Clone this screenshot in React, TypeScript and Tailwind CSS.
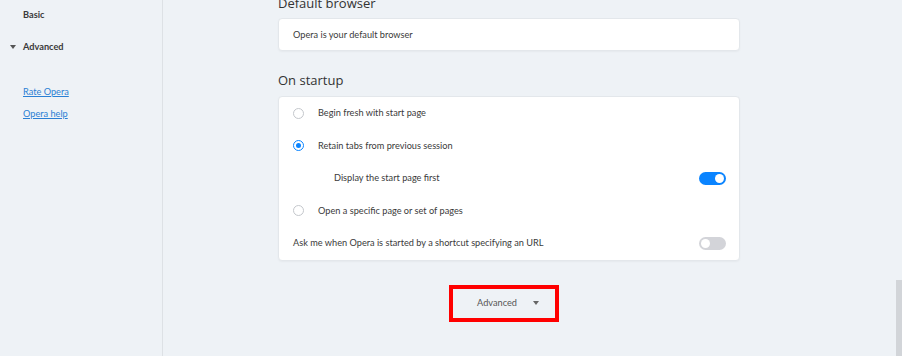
function Radio({ checked }: { checked?: boolean }) {
  return checked ? (
    <span className="flex h-[11px] w-[11px] items-center justify-center rounded-full border-[1.5px] border-[#0a84ff]">
      <span className="h-[5px] w-[5px] rounded-full bg-[#0a84ff]" />
    </span>
  ) : (
    <span className="h-[11px] w-[11px] rounded-full border border-[#c4c7cc]" />
  );
}

function Toggle({ on }: { on?: boolean }) {
  return (
    <span
      className={`flex h-[13px] w-[27px] items-center rounded-full px-[2px] ${
        on ? 'justify-end bg-[#0a84ff]' : 'justify-start bg-[#d3d4d9]'
      }`}
    >
      <span className="h-[9px] w-[9px] rounded-full bg-white" />
    </span>
  );
}

export default function App() {
  const rows = [
    { kind: 'radio', label: 'Begin fresh with start page' },
    { kind: 'radio', label: 'Retain tabs from previous session', checked: true },
    { kind: 'sub', label: 'Display the start page first', on: true },
    { kind: 'radio', label: 'Open a specific page or set of pages' },
    { kind: 'toggle', label: 'Ask me when Opera is started by a shortcut specifying an URL', on: false },
  ];

  return (
    <div className="flex h-[356px] w-[902px] overflow-hidden bg-[#eef2f6] font-['Lato',sans-serif] text-[#3a3a3a]">
      {/* sidebar */}
      <aside className="flex w-[163px] shrink-0 flex-col border-r border-[#dde1e5] pt-[7px] text-[9.2px]">
        <div className="pl-[23px] font-bold leading-[16px] text-[#3a3a3a]">Basic</div>
        <div className="mt-[16px] flex items-center leading-[16px] font-bold text-[#3a3a3a]">
          <span className="ml-[10px] mr-[7px] h-0 w-0 border-x-[3px] border-t-[4px] border-x-transparent border-t-[#555]" />
          Advanced
        </div>
        <a className="mt-[29px] pl-[23px] leading-[16px] text-[#2a7fd4] underline">Rate Opera</a>
        <a className="mt-[6px] pl-[23px] leading-[16px] text-[#2a7fd4] underline">Opera help</a>
      </aside>

      {/* main */}
      <main className="relative flex-1">
        <div className="-mt-[5px] ml-[115px] flex w-[462px] flex-col">
          <h2 className="font-['Open_Sans',sans-serif] text-[13px] leading-[16px] text-[#333]">Default browser</h2>
          <div className="mt-[7px] flex h-[33px] items-center rounded-[4px] border border-[#e3e7eb] bg-white px-[14px] text-[9.2px] shadow-[0_1px_2px_rgba(0,0,0,0.04)]">
            Opera is your default browser
          </div>

          <h2 className="mt-[21px] font-['Open_Sans',sans-serif] text-[13px] leading-[16px] text-[#333]">On startup</h2>
          <div className="mt-[8px] flex flex-col rounded-[4px] border border-[#e3e7eb] bg-white text-[9.2px] shadow-[0_1px_2px_rgba(0,0,0,0.04)]">
            {rows.map((r) => (
              <div key={r.label} className="flex h-[32.5px] items-center pl-[14px] pr-[13px]">
                {r.kind === 'radio' && (
                  <>
                    <span className="mr-[14px] flex w-[11px] justify-center">
                      <Radio checked={r.checked} />
                    </span>
                    <span>{r.label}</span>
                  </>
                )}
                {r.kind === 'sub' && (
                  <>
                    <span className="ml-[41px] flex-1">{r.label}</span>
                    <Toggle on={r.on} />
                  </>
                )}
                {r.kind === 'toggle' && (
                  <>
                    <span className="flex-1">{r.label}</span>
                    <Toggle on={r.on} />
                  </>
                )}
              </div>
            ))}
          </div>

          <div className="mt-[24px] flex justify-center pr-[10px]">
            <button className="flex h-[37px] w-[110px] items-center justify-center border-[4px] border-[#ff0000] pl-[8px] text-[9.2px] text-[#555]">
              <span>Advanced</span>
              <span className="ml-[16px] h-0 w-0 border-x-[3px] border-t-[4px] border-x-transparent border-t-[#666]" />
            </button>
          </div>
        </div>

        {/* scrollbar thumb */}
        <div className="absolute right-0 top-[280px] h-[76px] w-[6px] bg-[#d2d5d9]" />
      </main>
    </div>
  );
}
